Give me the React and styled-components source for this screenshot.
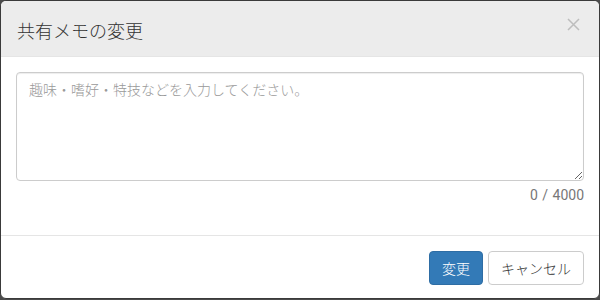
import React from "react";
import styled, { createGlobalStyle } from "styled-components";

const Global = createGlobalStyle`
  html, body { margin: 0; padding: 0; }
  body {
    background: #4b4b4b;
    font-family: Roboto, "Noto Sans CJK JP", sans-serif;
    color: #333;
  }
  * { box-sizing: border-box; }
`;

const Page = styled.div`
  width: 600px;
  height: 300px;
`;

const Modal = styled.div`
  width: 600px;
  height: 299px;
  background: #fff;
  border: 1px solid #3a3a3a;
  border-radius: 6px;
  overflow: hidden;
  display: flex;
  flex-direction: column;
`;

const Header = styled.div`
  height: 56px;
  background: #ececec;
  border-bottom: 1px solid #e5e5e5;
  display: flex;
  align-items: center;
  justify-content: space-between;
  padding: 0 19px 0 16px;
`;

const Title = styled.h4`
  margin: 0;
  font-size: 18px;
  font-weight: 300;
  color: #333;
  line-height: 26px;
  font-family: "Noto Sans CJK JP", sans-serif;
  position: relative;
  top: 1px;
`;

const Close = styled.button`
  border: 0;
  background: transparent;
  padding: 0;
  width: 13px;
  height: 13px;
  display: flex;
  cursor: pointer;
  position: relative;
  top: -4px;
`;

const Body = styled.div`
  padding: 15px 15px 0;
  flex: 1;
  display: flex;
  flex-direction: column;
`;

const Textarea = styled.textarea`
  display: block;
  width: 100%;
  height: 109px;
  border: 1px solid #ccc;
  border-radius: 4px;
  padding: 6px 12px;
  font-size: 14px;
  font-weight: 300;
  line-height: 20px;
  font-family: "Noto Sans CJK JP", sans-serif;
  color: #555;
  resize: vertical;
  box-shadow: inset 0 1px 1px rgba(0, 0, 0, 0.075);
  outline: none;
  &::placeholder { color: #999; }
`;

const Counter = styled.div`
  text-align: right;
  font-size: 14px;
  line-height: 20px;
  color: #777;
  margin-top: 4px;
  word-spacing: 1px;
`;

const Footer = styled.div`
  border-top: 1px solid #e5e5e5;
  padding: 15px 15px 13px;
  display: flex;
  justify-content: flex-end;
  gap: 5px;
`;

const Button = styled.button`
  height: 34px;
  padding: 0 12px;
  font-size: 14px;
  font-weight: 300;
  line-height: 20px;
  font-family: "Noto Sans CJK JP", sans-serif;
  border-radius: 4px;
  border: 1px solid ${(p) => (p.$primary ? "#2e6da4" : "#ccc")};
  background: ${(p) => (p.$primary ? "#337ab7" : "#fff")};
  color: ${(p) => (p.$primary ? "#fff" : "#333")};
  cursor: pointer;
`;

export default function App() {
  return (
    <Page>
      <Global />
      <Modal>
        <Header>
          <Title>共有メモの変更</Title>
          <Close aria-label="閉じる">
            <svg width="13" height="13" viewBox="0 0 13 13">
              <path d="M1 1 L12 12 M12 1 L1 12" stroke="#bdbdbd" strokeWidth="1.5" />
            </svg>
          </Close>
        </Header>
        <Body>
          <Textarea placeholder="趣味・嗜好・特技などを入力してください。" />
          <Counter>0 / 4000</Counter>
        </Body>
        <Footer>
          <Button $primary>変更</Button>
          <Button>キャンセル</Button>
        </Footer>
      </Modal>
    </Page>
  );
}
